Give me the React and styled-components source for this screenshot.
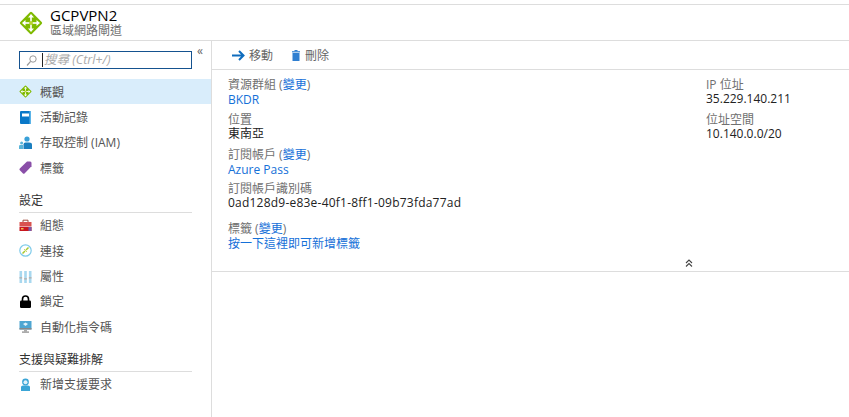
import React from 'react';
import styled, { createGlobalStyle } from 'styled-components';

const FONT = `"Open Sans", "Noto Sans CJK TC", sans-serif`;

const GlobalStyle = createGlobalStyle`
  html, body { margin: 0; padding: 0; background: #fff; }
  body { font-family: ${FONT}; font-size: 12px; color: #333; }
`;

const Page = styled.div`
  width: 849px;
  height: 417px;
  overflow: hidden;
  display: flex;
  flex-direction: column;
  padding-top: 4px;
  box-sizing: border-box;
`;

const Header = styled.header`
  height: 37px;
  box-sizing: border-box;
  border-top: 1px solid #ddd;
  border-bottom: 1px solid #ddd;
  display: flex;
  align-items: center;
  padding-left: 19px;
  gap: 7px;
  flex-shrink: 0;
`;

const TitleBlock = styled.div`
  display: flex;
  flex-direction: column;
`;

const Title = styled.div`
  font-size: 15px;
  line-height: 16px;
  color: #000;
`;

const Subtitle = styled.div`
  font-size: 12px;
  line-height: 16px;
  color: #707070;
`;

const Body = styled.div`
  flex: 1;
  display: flex;
  min-height: 0;
`;

const Sidebar = styled.aside`
  width: 212px;
  box-sizing: border-box;
  border-right: 1px solid #ddd;
  flex-shrink: 0;
  padding-top: 10px;
  position: relative;
`;

const SearchBox = styled.div`
  width: 173px;
  height: 18px;
  margin-left: 19px;
  box-sizing: border-box;
  border: 1px solid #15528f;
  display: flex;
  align-items: center;
  padding-left: 6px;
  gap: 5px;
`;

const SearchText = styled.span`
  font-size: 12.5px;
  font-style: italic;
  color: #aaa;
  border-left: 1px solid #222;
  padding-left: 1px;
  line-height: 14px;
`;

const Collapse = styled.span`
  position: absolute;
  left: 197px;
  top: 3px;
  font-size: 12px;
  line-height: 14px;
  color: #666;
`;

const Nav = styled.nav`
  margin-top: 10px;
  display: flex;
  flex-direction: column;
`;

const NavItem = styled.div`
  height: 25.4px;
  display: flex;
  align-items: center;
  padding-left: 19px;
  gap: 8px;
  font-size: 12px;
  color: #555;
  background: ${(p) => (p.$active ? '#d9edfb' : 'transparent')};
`;

const IconSlot = styled.span`
  width: 13px;
  height: 13px;
  display: inline-flex;
  flex-shrink: 0;
`;

const SectionTitle = styled.div`
  margin: 12px 19px 0;
  width: 173px;
  height: 20px;
  box-sizing: border-box;
  border-bottom: 1px solid #ddd;
  font-size: 12px;
  line-height: 15px;
  color: #333;
`;

const Main = styled.main`
  flex: 1;
  display: flex;
  flex-direction: column;
  min-width: 0;
`;

const Toolbar = styled.div`
  height: 29px;
  box-sizing: border-box;
  border-bottom: 1px solid #ddd;
  display: flex;
  align-items: center;
  padding-left: 20px;
  gap: 19px;
  flex-shrink: 0;
`;

const ToolButton = styled.span`
  display: inline-flex;
  align-items: center;
  gap: ${(p) => p.$gap}px;
  font-size: 12px;
  color: #666;
`;

const Essentials = styled.section`
  height: 202px;
  box-sizing: border-box;
  border-bottom: 1px solid #ddd;
  padding: 8px 0 0 16px;
  display: flex;
  position: relative;
`;

const LeftColumn = styled.div`
  width: 478px;
  display: flex;
  flex-direction: column;
`;

const RightColumn = styled.div`
  display: flex;
  flex-direction: column;
`;

const Field = styled.div`
  display: flex;
  flex-direction: column;
  margin-bottom: ${(p) => p.$gap}px;
`;

const Label = styled.div`
  font-size: 12px;
  line-height: 14px;
  color: #707070;
`;

const Value = styled.div`
  font-size: 12px;
  line-height: ${(p) => p.$line || 15}px;
  color: #222;
  letter-spacing: ${(p) => p.$spacing || 0}px;
`;

const LinkText = styled.a`
  color: #1570d8;
  text-decoration: none;
`;

const Chevron = styled.span`
  position: absolute;
  left: 473px;
  bottom: 4px;
  display: inline-flex;
`;

const GatewayIcon = ({ size = 13 }) => (
  <svg width={size} height={size} viewBox="0 0 24 24">
    <rect x="3.7" y="3.7" width="16.6" height="16.6" rx="1.5" transform="rotate(45 12 12)" fill="#7fba00" />
    <g fill="#fff">
      <path d="M12 3 15 6.5H9Z" />
      <path d="M12 21 15 17.5H9Z" />
      <path d="M3 12 6.5 9V15Z" />
      <path d="M21 12 17.5 9V15Z" />
      <rect x="11.2" y="6" width="1.6" height="12" />
      <rect x="6" y="11.2" width="12" height="1.6" />
    </g>
    <circle cx="12" cy="12" r="2" fill="#b8d432" />
  </svg>
);

const LogIcon = () => (
  <svg width="13" height="13" viewBox="0 0 13 13">
    <rect x="1" y="0" width="11" height="13" rx="1" fill="#0a78c8" />
    <rect x="3" y="2.5" width="7" height="3" fill="#fff" />
    <rect x="10.5" y="0" width="1.5" height="13" fill="#5cb4e8" />
  </svg>
);

const IamIcon = () => (
  <svg width="13" height="13" viewBox="0 0 13 13">
    <circle cx="8" cy="3" r="2.6" fill="#3aa0d8" />
    <path d="M4.5 13V8.5Q4.5 6.5 6.5 6.5H10Q13 6.5 13 8.5V13Z" fill="#1b7fbf" />
    <circle cx="2.6" cy="7" r="1.5" fill="#59b4d9" />
    <path d="M0 13V10.2Q0 9 1.2 9H4V13Z" fill="#59b4d9" />
  </svg>
);

const TagIcon = () => (
  <svg width="13" height="13" viewBox="0 0 13 13">
    <path d="M8 0.5H11.2Q12.5 0.5 12.5 2V5.2L5.5 12.5Q4.8 13 4 12.5L0.6 9Q0.2 8.3 0.8 7.6Z" fill="#8a4fa8" />
  </svg>
);

const ToolboxIcon = () => (
  <svg width="13" height="13" viewBox="0 0 13 13">
    <path d="M4 3V1.2H9V3" fill="none" stroke="#a04a3a" strokeWidth="1" />
    <rect x="0.5" y="3" width="12" height="4" fill="#d9534f" />
    <rect x="0.5" y="7.6" width="12" height="4.4" fill="#c8171e" />
    <rect x="9.5" y="8" width="3" height="4" fill="#7a5aa6" />
    <rect x="2" y="9" width="2.5" height="1.5" fill="#f2c14e" />
  </svg>
);

const ConnectIcon = () => (
  <svg width="13" height="13" viewBox="0 0 13 13">
    <circle cx="6.5" cy="6.5" r="5.7" fill="#fff" stroke="#7fcbea" strokeWidth="1.2" />
    <path d="M3.5 9.5 6 7M7 6 9.5 3.5" stroke="#a8c830" strokeWidth="1.5" />
    <path d="M5 5 8 8" stroke="#c9d96a" strokeWidth="1" />
  </svg>
);

const PropsIcon = () => (
  <svg width="13" height="13" viewBox="0 0 13 13">
    <rect x="0.5" y="1" width="2.6" height="12" fill="#a8d8ef" />
    <rect x="5.2" y="1" width="2.6" height="12" fill="#a8d8ef" />
    <rect x="9.9" y="1" width="2.6" height="12" fill="#a8d8ef" />
    <rect x="0.5" y="7" width="2.6" height="1.6" fill="#b5b5b5" />
    <rect x="5.2" y="8" width="2.6" height="1.6" fill="#b5b5b5" />
    <rect x="9.9" y="7" width="2.6" height="1.6" fill="#b5b5b5" />
  </svg>
);

const LockIcon = () => (
  <svg width="13" height="13" viewBox="0 0 13 13">
    <path d="M3.5 6V4a3 3 0 0 1 6 0V6" fill="none" stroke="#000" strokeWidth="1.6" />
    <rect x="1" y="5.5" width="11" height="7.5" rx="1.2" fill="#000" />
  </svg>
);

const ScriptIcon = () => (
  <svg width="13" height="13" viewBox="0 0 13 13">
    <rect x="0.5" y="1" width="12" height="8.5" fill="#4ea6d2" />
    <rect x="0.5" y="8" width="12" height="1.5" fill="#888" />
    <path d="M4 4 6.5 2.5 9 4 6.5 6Z" fill="#dff1fa" />
    <rect x="5" y="9.5" width="3" height="2" fill="#aaa" />
    <rect x="3" y="11.5" width="7" height="1.2" fill="#888" />
  </svg>
);

const SupportIcon = () => (
  <svg width="13" height="13" viewBox="0 0 13 13">
    <path d="M2 13V9Q2 7.5 4 7.5H9Q11 7.5 11 9V13Z" fill="#3ba5d6" />
    <circle cx="6.5" cy="4" r="3.4" fill="#3ba5d6" />
    <circle cx="6.5" cy="4.2" r="2" fill="#dff1fa" />
  </svg>
);

const SearchIcon = () => (
  <svg width="11" height="11" viewBox="0 0 11 11">
    <circle cx="7" cy="4" r="3.2" fill="none" stroke="#999" strokeWidth="1" />
    <path d="M4.6 6.4 1 10.5" stroke="#999" strokeWidth="1.2" />
  </svg>
);

const ArrowIcon = () => (
  <svg width="13" height="11" viewBox="0 0 13 11">
    <path d="M0 5.5H11M7 1 11.5 5.5 7 10" fill="none" stroke="#0f6cbd" strokeWidth="2" />
  </svg>
);

const TrashIcon = () => (
  <svg width="8" height="11" viewBox="0 0 8 11">
    <rect x="2.5" y="0" width="3" height="1.2" fill="#2f7fd1" />
    <rect x="0" y="1.2" width="8" height="1.2" fill="#2f7fd1" />
    <rect x="0.5" y="3" width="7" height="8" fill="#2f7fd1" />
  </svg>
);

const UpChevrons = () => (
  <svg width="8" height="8" viewBox="0 0 8 8">
    <path d="M1 4 4 1 7 4M1 7.5 4 4.5 7 7.5" fill="none" stroke="#444" strokeWidth="1.1" />
  </svg>
);

const NAV_TOP = [
  { label: '概觀', icon: <GatewayIcon />, active: true },
  { label: '活動記錄', icon: <LogIcon /> },
  { label: '存取控制 (IAM)', icon: <IamIcon /> },
  { label: '標籤', icon: <TagIcon /> },
];

const NAV_SETTINGS = [
  { label: '組態', icon: <ToolboxIcon /> },
  { label: '連接', icon: <ConnectIcon /> },
  { label: '屬性', icon: <PropsIcon /> },
  { label: '鎖定', icon: <LockIcon /> },
  { label: '自動化指令碼', icon: <ScriptIcon /> },
];

const NAV_SUPPORT = [{ label: '新增支援要求', icon: <SupportIcon /> }];

const NavList = ({ items }) =>
  items.map((item) => (
    <NavItem key={item.label} $active={item.active}>
      <IconSlot>{item.icon}</IconSlot>
      {item.label}
    </NavItem>
  ));

const App = () => (
  <Page>
    <GlobalStyle />
    <Header>
      <GatewayIcon size={24} />
      <TitleBlock>
        <Title>GCPVPN2</Title>
        <Subtitle>區域網路閘道</Subtitle>
      </TitleBlock>
    </Header>
    <Body>
      <Sidebar>
        <SearchBox>
          <SearchIcon />
          <SearchText>搜尋 (Ctrl+/)</SearchText>
        </SearchBox>
        <Collapse>«</Collapse>
        <Nav>
          <NavList items={NAV_TOP} />
          <SectionTitle>設定</SectionTitle>
          <NavList items={NAV_SETTINGS} />
          <SectionTitle>支援與疑難排解</SectionTitle>
          <NavList items={NAV_SUPPORT} />
        </Nav>
      </Sidebar>
      <Main>
        <Toolbar>
          <ToolButton $gap={4}>
            <ArrowIcon />
            移動
          </ToolButton>
          <ToolButton $gap={5}>
            <TrashIcon />
            刪除
          </ToolButton>
        </Toolbar>
        <Essentials>
          <LeftColumn>
            <Field $gap={6}>
              <Label>
                資源群組 (<LinkText>變更</LinkText>)
              </Label>
              <Value>
                <LinkText>BKDR</LinkText>
              </Value>
            </Field>
            <Field $gap={7}>
              <Label>位置</Label>
              <Value $line={14}>東南亞</Value>
            </Field>
            <Field $gap={4}>
              <Label>
                訂閱帳戶 (<LinkText>變更</LinkText>)
              </Label>
              <Value $line={16}>
                <LinkText>Azure Pass</LinkText>
              </Value>
            </Field>
            <Field $gap={12}>
              <Label>訂閱帳戶識別碼</Label>
              <Value $line={14} $spacing={0.22}>0ad128d9-e83e-40f1-8ff1-09b73fda77ad</Value>
            </Field>
            <Field $gap={0}>
              <Label>
                標籤 (<LinkText>變更</LinkText>)
              </Label>
              <Value>
                <LinkText>按一下這裡即可新增標籤</LinkText>
              </Value>
            </Field>
          </LeftColumn>
          <RightColumn>
            <Field $gap={7}>
              <Label>IP 位址</Label>
              <Value $line={14}>35.229.140.211</Value>
            </Field>
            <Field $gap={0}>
              <Label>位址空間</Label>
              <Value $line={14}>10.140.0.0/20</Value>
            </Field>
          </RightColumn>
          <Chevron>
            <UpChevrons />
          </Chevron>
        </Essentials>
      </Main>
    </Body>
  </Page>
);

export default App;
